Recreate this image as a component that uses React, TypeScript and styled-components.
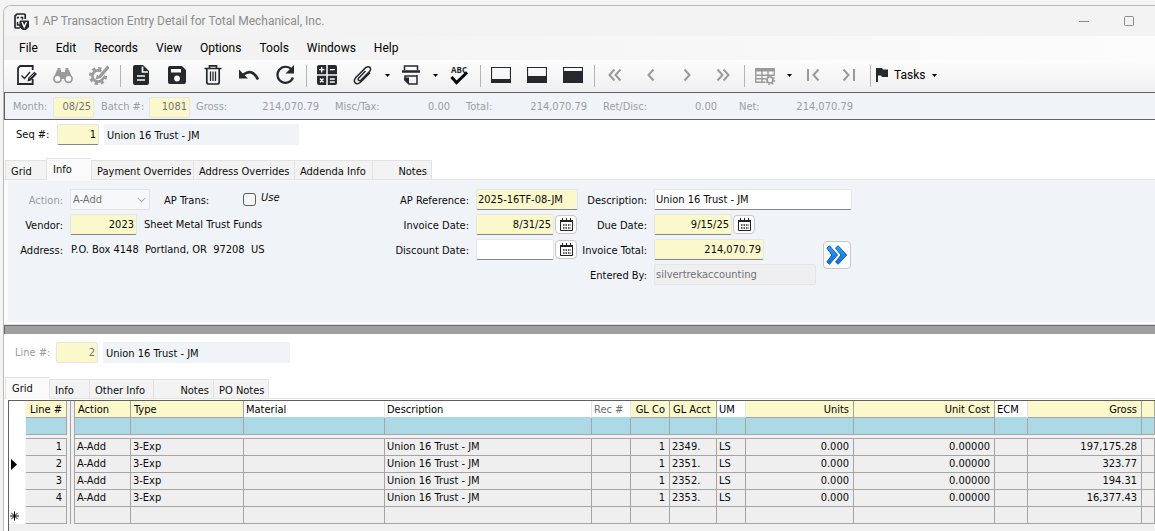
import React from "react";
import styled, { createGlobalStyle, css } from "styled-components";

const ink = "#0a0a0a";
const iconInk = "#25292d";
const mutedIcon = "#9a9a9a";
const mutedText = "#9b9da1";
const required = "#fbf9cc";
const pane = "#f0f4f8";
const rule = "#a5a5a5";
const formFont = `"DejaVu Sans Condensed", "DejaVu Sans", Tahoma, sans-serif`;
const menuFont = `Roboto, "Noto Sans", "Segoe UI", sans-serif`;

const GlobalStyle = createGlobalStyle`
  * { box-sizing: border-box; }
  html { background: #f4f4f4; }
  body { margin: 0; overflow: hidden; font-family: ${formFont}; font-size: 11px; line-height: 14px; color: ${ink}; }
  button, input, select { font: inherit; color: inherit; margin: 0; }
`;

const Page = styled.div`
  padding: 5px 0 0 3px;
  min-height: 100vh;
  display: flex;
`;

const Window = styled.main`
  flex: 1;
  min-width: 0;
  display: flex;
  flex-direction: column;
  border-top: 1px solid #b9b9b9;
  border-left: 1px solid #b9b9b9;
  border-top-left-radius: 8px;
  background: #fff;
  overflow: hidden;
`;

const TitleBar = styled.header`
  display: flex;
  align-items: center;
  height: 30px;
  padding: 0 20px 0 10px;
  background: #f3f3f3;
  color: #8c8c8c;
  font-family: ${menuFont};
`;

const Title = styled.h1`
  flex: 1;
  margin: 0 0 0 4px;
  font-size: 12px;
  font-weight: 400;
`;

const CaptionButton = styled.button`
  display: flex;
  align-items: center;
  justify-content: center;
  width: 45px;
  height: 28px;
  padding: 0;
  border: 0;
  background: none;
  &:last-child { margin-right: -16px; }
`;

const MenuBar = styled.nav`
  display: flex;
  align-items: center;
  height: 24px;
  padding-left: 6px;
  background: linear-gradient(90deg, #f0f0f0, #fcfcfc);
  font-family: ${menuFont};
  font-size: 12px;
  color: #000;
`;

const MenuItem = styled.button`
  padding: 0 9px;
  border: 0;
  background: none;
`;

const Toolbar = styled.div`
  display: flex;
  align-items: center;
  height: 32px;
  padding-left: 5px;
  background: linear-gradient(#fdfdfd, #efefef);
`;

const ToolButton = styled.button<{ $muted?: boolean }>`
  display: flex;
  align-items: center;
  justify-content: center;
  width: 36px;
  height: 32px;
  padding: 0 0 2px;
  border: 0;
  background: none;
  color: ${(p) => (p.$muted ? mutedIcon : iconInk)};
`;

const ArrowButton = styled(ToolButton)`
  width: 12px;
`;

const TasksButton = styled(ToolButton)`
  width: auto;
  gap: 6px;
  padding-left: 3px;
  color: #000;
  font-family: ${menuFont};
  font-size: 12px;
`;

const Separator = styled.span`
  width: 1px;
  height: 22px;
  margin: 0 2px 0 3px;
  background: #b5b5b5;
`;

const SummaryStrip = styled.section`
  display: flex;
  align-items: center;
  height: 28px;
  padding: 2px 0 0 8px;
  border: 1px solid #606266;
  border-right: 0;
  background: ${pane};
  color: ${mutedText};
`;

const SummaryField = styled.label<{ $width: number; $gap: number }>`
  display: flex;
  align-items: center;
  justify-content: space-between;
  width: ${(p) => p.$width}px;
  margin-right: ${(p) => p.$gap}px;
  white-space: nowrap;
`;

const SummaryValue = styled.output`
  text-align: right;
`;

const Input = styled.input<{
  $width: number;
  $right?: boolean;
  $required?: boolean;
}>`
  width: ${(p) => p.$width}px;
  height: 21px;
  padding: 0 2px 1px 1px;
  border: 1px solid #e3e5e8;
  border-bottom-color: #85878a;
  border-radius: 2px;
  background: ${(p) => (p.$required ? required : "#fff")};
  text-align: ${(p) => (p.$right ? "right" : "left")};
  outline: none;
  &:disabled {
    color: #707275;
    border-color: #e3e5e8;
    background: ${(p) => (p.$required ? required : "#efefef")};
  }
`;

const RecordHeader = styled.div<{ $top: number; $height: number; $inset: number }>`
  display: flex;
  align-items: flex-start;
  height: ${(p) => p.$height}px;
  padding: ${(p) => p.$top}px 0 0 ${(p) => p.$inset}px;
`;

const RecordLabel = styled.label<{ $muted?: boolean }>`
  width: 40px;
  margin-right: 1px;
  line-height: 21px;
  white-space: nowrap;
  color: ${(p) => (p.$muted ? mutedText : ink)};
`;

const RecordName = styled.output<{ $width: number }>`
  width: ${(p) => p.$width}px;
  height: 21px;
  margin-left: 5px;
  padding: 2px 3px 0;
  line-height: 20px;
  background: ${pane};
`;

const TabStrip = styled.div`
  display: flex;
  align-items: flex-end;
  height: 22px;
  padding-left: 1px;
  border-bottom: 1px solid #e2e2e2;
`;

const Tab = styled.button<{ $width: number; $selected?: boolean; $end?: boolean }>`
  width: ${(p) => p.$width}px;
  height: 19px;
  padding: 3px 4px 0 5px;
  border: 1px solid #e2e2e2;
  border-bottom: 0;
  border-right: 0;
  background: #f3f3f3;
  text-align: ${(p) => (p.$end ? "right" : "left")};
  line-height: 14px;
  white-space: nowrap;
  &:last-child { border-right: 1px solid #e2e2e2; }
  ${(p) =>
    p.$selected &&
    css`
      height: 22px;
      margin-bottom: -1px;
      padding: 1px 6px 0;
      background: #fafafa;
    `}
`;

const PanelFrame = styled.section`
  padding: 1px 0 2px 4px;
  border-bottom: 1px solid #e2e2e2;
  background: #fafafa;
`;

const InfoPanel = styled.div`
  display: flex;
  align-items: flex-start;
  height: 141px;
  padding-top: 8px;
  background: ${pane};
`;

const FieldColumn = styled.div<{ $label: number; $width: number }>`
  display: grid;
  grid-template-columns: ${(p) => p.$label}px 1fr;
  column-gap: 7px;
  grid-auto-rows: 21px;
  row-gap: 4px;
  align-items: center;
  width: ${(p) => p.$width}px;
`;

const FieldLabel = styled.label<{ $muted?: boolean }>`
  padding-top: 2px;
  text-align: right;
  white-space: nowrap;
  color: ${(p) => (p.$muted ? mutedText : ink)};
`;

const FieldRow = styled.div`
  display: flex;
  align-items: center;
  gap: 1px;
`;

const FieldText = styled.output<{ $gap?: number }>`
  padding: 1px 0 0 ${(p) => p.$gap ?? 0}px;
  white-space: nowrap;
`;

const SelectBox = styled.div`
  display: grid;
  align-items: center;
  width: 80px;
  & > * { grid-area: 1 / 1; }
  & > svg { justify-self: end; margin-right: 4px; pointer-events: none; }
`;

const Select = styled.select`
  appearance: none;
  width: 100%;
  height: 21px;
  padding: 0 2px;
  border: 1px solid #e0e2e4;
  border-radius: 1px;
  background: #f7f8f9;
  color: #707275;
  opacity: 1;
`;

const TransLabel = styled.span`
  width: 78px;
  margin-left: 13px;
  padding-top: 2px;
`;

const UseLabel = styled.label`
  display: flex;
  align-items: flex-start;
  gap: 5px;
  height: 20px;
  line-height: 16px;
  font-style: italic;
`;

const Checkbox = styled.input`
  appearance: none;
  width: 13px;
  height: 13px;
  margin-top: 3px;
  border: 1px solid #5c5c5c;
  border-radius: 3px;
  background: #f6f6f6;
`;

const DateButton = styled.button`
  display: flex;
  align-items: center;
  justify-content: center;
  width: 22px;
  height: 19px;
  padding: 0;
  border: 1px solid #c6c8ca;
  border-radius: 4px;
  background: #fdfdfd;
  color: #222;
`;

const AdvanceButton = styled(DateButton)`
  width: 28px;
  height: 28px;
  margin-top: 52px;
`;

const Splitter = styled.div`
  height: 9px;
  border-top: 1px solid #6b6b6b;
  border-left: 1px solid #6b6b6b;
  background: #a0a0a0;
`;

const GridFrame = styled.section`
  flex: 1;
  margin: 1px 0 0 4px;
  border-top: 1px solid #606060;
  border-left: 1px solid #606060;
  background: #f0f0f0;
`;

const Table = styled.table`
  width: 100%;
  table-layout: fixed;
  border-collapse: separate;
  border-spacing: 0;
`;

const Row = styled.tr<{ $height: number }>`
  height: ${(p) => p.$height}px;
`;

const Cell = styled.td<{ $end?: boolean }>`
  padding: 0 4px 0 2px;
  border-right: 1px solid ${rule};
  border-bottom: 1px solid ${rule};
  background: #efefef;
  text-align: ${(p) => (p.$end ? "right" : "left")};
  line-height: 14px;
  white-space: nowrap;
  overflow: hidden;
`;

const HeadCell = styled(Cell)<{ $required?: boolean; $muted?: boolean }>`
  padding: 2px 4px 0 ${(p) => (p.$required ? 3 : 2)}px;
  font-weight: 400;
  background: ${(p) => (p.$required ? required : "#fff")};
  border-right-color: ${(p) => (p.$required ? rule : "#e6e6e6")};
  border-bottom-color: ${(p) => (p.$required ? rule : "#add8e6")};
  color: ${(p) => (p.$muted ? "#6c6c6c" : "#000")};
`;

const FilterCell = styled(Cell)`
  background: #add8e6;
`;

const SpacerCell = styled(Cell)`
  padding: 0;
  border-right: 0;
  background: #f0f0f0;
  line-height: 0;
`;

const MarkerCell = styled.td`
  padding: 0;
  background: #fff;
  border-right: 1px solid #f4f4f4;
  line-height: 0;
`;

const RailCell = styled.td`
  padding: 0;
  border-right: 1px solid ${rule};
  background: #f0f0f0;
`;

type IconProps = { size?: number; children: React.ReactNode };
const Icon = ({ size = 20, children }: IconProps) => (
  <svg
    width={size}
    height={size}
    viewBox={`0 0 ${size} ${size}`}
    fill="none"
    stroke="currentColor"
    strokeWidth="2"
    aria-hidden="true"
  >
    {children}
  </svg>
);

const AppIcon = () => (
  <svg width="15" height="17" viewBox="0 0 15 17" fill="none" stroke={iconInk} aria-hidden="true">
    <path d="M11.200 6V2q0-1-1-1H3L1 2.800V14q0 1 1 1h4" strokeWidth="1.700" />
    <path d="M3.500 5.500v-1H5M6.500 4.500h2v2M3.500 9v3H6" strokeWidth="1.500" />
    <path d="M6 8h8.500v6L12 16.500H8.500L6 14Z" fill={iconInk} />
    <path d="m8 9 2.200 5 2.300-5" stroke="#fff" strokeWidth="1.500" />
  </svg>
);

const EditIcon = () => (
  <Icon>
    <path d="M15.700 5V1H3L1 3v16h14.700v-5" strokeWidth="1.800" />
    <path d="m4.500 10.500 3 3 5.500-6.500" strokeWidth="1.400" />
    <path d="m10.500 16.500.8-3.700 6-6 2.700 2.200-6.200 6.500Z" fill="currentColor" stroke="none" />
    <path d="m12.500 13.500 5-5" stroke="#fafafa" strokeWidth=".6" />
  </Icon>
);

const FindIcon = () => (
  <Icon>
    <path d="M4 5h4v2h4V5h4l1.500 3.500L19 13l-4.500-2-3 3h-3l-3-3L1 13l1.500-4.500Z" fill="currentColor" stroke="none" />
    <path d="M4.500 3h3v2h-3zM12.500 3h3v2h-3z" fill="currentColor" stroke="none" />
    <circle cx="4.500" cy="13.800" r="3.600" fill="#fafafa" strokeWidth="1.700" />
    <circle cx="15.500" cy="13.800" r="3.600" fill="#fafafa" strokeWidth="1.700" />
  </Icon>
);

const SettingsEditIcon = () => (
  <Icon>
    <circle cx="9" cy="11" r="5.600" strokeWidth="2.600" />
    <circle cx="9" cy="11" r="7.700" strokeWidth="2.800" strokeDasharray="3.200 2.850" />
    <path d="m11 11.500 8.500-10" stroke="#f7f7f7" strokeWidth="5" />
    <path d="m10.500 12 9-10.500" strokeWidth="3.200" />
    <path d="m6.500 14.500 1.500-5 4 3.500Z" fill="currentColor" stroke="none" />
  </Icon>
);

const DocumentIcon = () => (
  <Icon>
    <path d="M4 0h8l6 6v12q0 2-2 2H4q-2 0-2-2V2q0-2 2-2Z" fill="currentColor" stroke="none" />
    <path d="M11.500 1.500V7H17M6 11h8M6 15h8" stroke="#fafafa" strokeWidth="1.700" />
  </Icon>
);

const SaveIcon = () => (
  <Icon>
    <path d="M3 1h12l4 4v12q0 2-2 2H3q-2 0-2-2V3q0-2 2-2Z" fill="currentColor" stroke="none" />
    <path d="M4 4h10v3.500H4z" fill="#fafafa" stroke="none" />
    <circle cx="10" cy="13.500" r="2.900" fill="#fafafa" stroke="none" />
  </Icon>
);

const TrashIcon = () => (
  <Icon>
    <path d="M1.500 3.500h17M6.500 3V.8h7V3M3.800 4v13q0 2 2 2h8.400q2 0 2-2V4" strokeWidth="1.700" />
    <path d="M7.500 6.500v9.500M10 6.500v9.500M12.500 6.500v9.500" strokeWidth="1.300" />
  </Icon>
);

const UndoIcon = () => (
  <Icon>
    <path d="M4.500 9.500Q13.500 3 19 14.500" strokeWidth="2.600" />
    <path d="M0 4.500v9h9Z" fill="currentColor" stroke="none" />
  </Icon>
);

const RefreshIcon = () => (
  <Icon>
    <path d="M16.500 4.500A8 8 0 1 0 18 12.500" strokeWidth="2.200" />
    <path d="M19 0v8.500h-8.500Z" fill="currentColor" stroke="none" />
  </Icon>
);

const CalculatorIcon = () => (
  <Icon>
    <path
      d="M2 0h7.200v9.200H0V2q0-2 2-2ZM10.800 0H18q2 0 2 2v7.200h-9.200zM0 10.800h9.200V20H2q-2 0-2-2zM10.800 10.800H20V18q0 2-2 2h-7.200z"
      fill="currentColor"
      stroke="none"
    />
    <path
      d="M2 4.700h5.500M4.700 2v5.500M12.800 4.700h5M3 13.500l3.500 3.700M6.500 13.500 3 17.200M12.800 14h5M12.800 17h5"
      stroke="#fff"
      strokeWidth="1.300"
    />
  </Icon>
);

const ClipIcon = () => (
  <Icon>
    <path
      d="m12.500 5.500-6.700 6.900q-1.200 1.500-.2 2.400t2.400-.2l8.500-8.700q2-2.400.4-4t-4.200.2L2.800 12q-2.600 3.200-.6 5.400 2.300 2 5.300-.6L17 7.300"
      strokeWidth="1.500"
      transform="translate(0 .5)"
    />
  </Icon>
);

const PrintIcon = () => (
  <Icon>
    <path d="M3.500 5V1h13v4" strokeWidth="1.500" />
    <path d="M1 6.500h18" strokeWidth="2.400" />
    <path d="M16 10v9H8l-4-4v-4h12" strokeWidth="1.500" />
    <path d="M3.200 12.500H8V19.500L3.200 15Z" fill="currentColor" stroke="none" />
  </Icon>
);

const SpellButtonIcon = () => (
  <Icon>
    <text x="10" y="8" textAnchor="middle" fontFamily="Open Sans, sans-serif" fontSize="8" fontWeight="700" fill="currentColor" stroke="none">
      ABC
    </text>
    <path d="m2.500 12 5 5.500L18 7.500" strokeWidth="3" stroke="#000" />
  </Icon>
);

const PaneIcon = ({ top }: { top: number }) => (
  <Icon>
    <path d="M.5 2.500h19v15H.5z" strokeWidth="1.200" />
    <path d={`M.5 ${top}h19v${18 - top}H.5z`} fill="currentColor" stroke="none" />
  </Icon>
);

const ChevronsIcon = ({ d }: { d: string }) => (
  <Icon>
    <path d={d} strokeWidth="2" />
  </Icon>
);

const TableSettingsIcon = () => (
  <Icon>
    <path d="M0 3h20v3.500H0z" fill="currentColor" stroke="none" />
    <path d="M.800 4v13.200H10M1 10.200h18M1 13.700h9M7 6v11M13 6v4M19.200 4v7" strokeWidth="1.400" />
    <circle cx="15" cy="15" r="3" fill="#f5f5f5" strokeWidth="1.700" />
    <circle cx="15" cy="15" r="4.400" strokeWidth="1.300" strokeDasharray="1.700 1.750" />
  </Icon>
);

const Caret = () => (
  <svg width="5" height="3" viewBox="0 0 5 3" aria-hidden="true">
    <path d="M0 0h5L2.500 3Z" fill="#000" />
  </svg>
);

const FlagIcon = () => (
  <svg width="12" height="14" viewBox="0 0 12 14" aria-hidden="true">
    <path d="M0 0h6l1 1.500h5V9H6L5 7.500H2V14H0Z" fill={iconInk} />
  </svg>
);

const CalendarIcon = () => (
  <svg width="13" height="13" viewBox="0 0 13 13" aria-hidden="true">
    <path d="M.5 2.500h12v10H.5z" fill="#fff" stroke="currentColor" />
    <path d="M0 3h13" stroke="currentColor" strokeWidth="2" />
    <path d="M2.500 0v3M6.500 0v3M10.500 0v3" stroke="currentColor" />
    <path d="M3 7h8M3 10h8" stroke="currentColor" strokeWidth="1.600" strokeDasharray="1.500 1" />
  </svg>
);

const AdvanceIcon = () => (
  <svg width="22" height="20" viewBox="0 0 22 20" aria-hidden="true">
    <defs>
      <linearGradient id="advanceBlue" x1="0" y1="0" x2="0" y2="1">
        <stop offset="0" stopColor="#35a0f2" />
        <stop offset="1" stopColor="#0b6fd8" />
      </linearGradient>
    </defs>
    <g fill="url(#advanceBlue)" stroke="#1260b8" strokeWidth="1" strokeLinejoin="round">
      <path d="M.800 3 3.500.8 11.500 10l-8 9.200L.8 17l5-7Z" />
      <path d="M9.500 3l2.700-2.200L20.700 10l-8.500 9.200L9.500 17l5.500-7Z" />
    </g>
  </svg>
);

const DateField = ({ id, label, width, value, filled }: { id: string; label: string; width: number; value: string; filled?: boolean }) => (
  <>
    <FieldLabel htmlFor={id}>{label}</FieldLabel>
    <FieldRow>
      <Input id={id} $width={width} $right $required={filled} defaultValue={value} />
      <DateButton aria-label={`Pick ${label}`}>
        <CalendarIcon />
      </DateButton>
    </FieldRow>
  </>
);

type Column = { name: string; width?: number; end?: boolean; required?: boolean; muted?: boolean };

const columns: Column[] = [
  { name: "Action", width: 56, required: true },
  { name: "Type", width: 113, required: true },
  { name: "Material", width: 141 },
  { name: "Description", width: 207 },
  { name: "Rec #", width: 39, muted: true },
  { name: "GL Co", width: 39, end: true, required: true },
  { name: "GL Acct", width: 47, required: true },
  { name: "UM", width: 29 },
  { name: "Units", width: 108, end: true, required: true },
  { name: "Unit Cost", width: 141, end: true, required: true },
  { name: "ECM", width: 33 },
  { name: "Gross", width: 114, end: true, required: true },
  { name: "", required: true },
];

const entry = (account: string, gross: string) => [
  "A-Add", "3-Exp", "", "Union 16 Trust - JM", "", "1", account, "LS", "0.000", "0.00000", "", gross, "",
];

const lines: { line: string; marker?: "current" | "new"; cells: string[] }[] = [
  { line: "1", cells: entry("2349.", "197,175.28") },
  { line: "2", marker: "current", cells: entry("2351.", "323.77") },
  { line: "3", cells: entry("2352.", "194.31") },
  { line: "4", cells: entry("2353.", "16,377.43") },
  { line: "", marker: "new", cells: columns.map(() => "") },
];

const Marker = ({ kind }: { kind?: "current" | "new" }) => {
  if (!kind) return null;
  return (
    <svg width="12" height="12" viewBox="0 0 12 12" aria-hidden="true">
      {kind === "current" ? (
        <path d="M2 0v11l6-5.500Z" fill="#000" />
      ) : (
        <path d="M5.500 1.500v9M1 6h9M2.300 2.800l6.400 6.400M8.700 2.800 2.300 9.200" stroke="#000" strokeWidth="1" />
      )}
    </svg>
  );
};

const LineGrid = () => (
  <GridFrame>
    <Table>
      <colgroup>
        <col style={{ width: 17 }} />
        <col style={{ width: 41 }} />
        <col style={{ width: 4 }} />
        <col style={{ width: 4 }} />
        {columns.map((c) => (
          <col key={c.name} style={{ width: c.width }} />
        ))}
      </colgroup>
      <thead>
        <Row $height={17}>
          <MarkerCell />
          <HeadCell as="th" scope="col" $end $required>Line #</HeadCell>
          <RailCell />
          <RailCell />
          {columns.map((c) => (
            <HeadCell as="th" scope="col" key={c.name} $end={c.end} $required={c.required} $muted={c.muted}>
              {c.name}
            </HeadCell>
          ))}
        </Row>
        <Row $height={17}>
          <MarkerCell />
          <FilterCell />
          <RailCell />
          <RailCell />
          {columns.map((c) => (
            <FilterCell key={c.name} />
          ))}
        </Row>
        <Row $height={4}>
          <MarkerCell />
          <SpacerCell />
          <RailCell />
          <RailCell />
          <SpacerCell colSpan={columns.length} />
        </Row>
      </thead>
      <tbody>
        {lines.map((l) => (
          <Row $height={17} key={l.line}>
            <MarkerCell>
              <Marker kind={l.marker} />
            </MarkerCell>
            <Cell $end>{l.line}</Cell>
            <RailCell />
            <RailCell />
            {l.cells.map((text, i) => (
              <Cell key={columns[i].name} $end={columns[i].end}>
                {text}
              </Cell>
            ))}
          </Row>
        ))}
      </tbody>
    </Table>
  </GridFrame>
);

const menus = ["File", "Edit", "Records", "View", "Options", "Tools", "Windows", "Help"];

const totals = [
  { label: "Gross:", value: "214,070.79", width: 123, gap: 16 },
  { label: "Misc/Tax:", value: "0.00", width: 115, gap: 16 },
  { label: "Total:", value: "214,070.79", width: 121, gap: 16 },
  { label: "Ret/Disc:", value: "0.00", width: 114, gap: 22 },
  { label: "Net:", value: "214,070.79", width: 114, gap: 0 },
];

export default function App() {
  return (
    <>
      <GlobalStyle />
      <Page>
        <Window>
          <TitleBar>
            <AppIcon />
            <Title>1 AP Transaction Entry Detail for Total Mechanical, Inc.</Title>
            <CaptionButton aria-label="Minimize">
              <svg width="10" height="10" viewBox="0 0 10 10"><path d="M0 5.500h10" stroke="#8c8c8c" /></svg>
            </CaptionButton>
            <CaptionButton aria-label="Maximize">
              <svg width="10" height="10" viewBox="0 0 10 10"><rect x=".5" y=".5" width="9" height="9" rx="1" fill="none" stroke="#8c8c8c" /></svg>
            </CaptionButton>
          </TitleBar>
          <MenuBar>
            {menus.map((m) => (
              <MenuItem key={m}>{m}</MenuItem>
            ))}
          </MenuBar>
          <Toolbar role="toolbar">
            <ToolButton aria-label="Edit"><EditIcon /></ToolButton>
            <ToolButton aria-label="Find" $muted><FindIcon /></ToolButton>
            <ToolButton aria-label="Validate" $muted><SettingsEditIcon /></ToolButton>
            <Separator />
            <ToolButton aria-label="New"><DocumentIcon /></ToolButton>
            <ToolButton aria-label="Save"><SaveIcon /></ToolButton>
            <ToolButton aria-label="Delete"><TrashIcon /></ToolButton>
            <ToolButton aria-label="Undo"><UndoIcon /></ToolButton>
            <ToolButton aria-label="Refresh"><RefreshIcon /></ToolButton>
            <Separator />
            <ToolButton aria-label="Calculator"><CalculatorIcon /></ToolButton>
            <ToolButton aria-label="Attachments"><ClipIcon /></ToolButton>
            <ArrowButton aria-label="Attachment options"><Caret /></ArrowButton>
            <ToolButton aria-label="Print"><PrintIcon /></ToolButton>
            <ArrowButton aria-label="Print options"><Caret /></ArrowButton>
            <ToolButton aria-label="Spelling"><SpellButtonIcon /></ToolButton>
            <Separator />
            <ToolButton aria-label="Small detail pane"><PaneIcon top={14} /></ToolButton>
            <ToolButton aria-label="Split panes"><PaneIcon top={11} /></ToolButton>
            <ToolButton aria-label="Large detail pane"><PaneIcon top={6} /></ToolButton>
            <Separator />
            <ToolButton aria-label="First" $muted><ChevronsIcon d="M9.500 4.500 4.500 10l5 5.500M15.500 4.500l-5 5.500 5 5.500" /></ToolButton>
            <ToolButton aria-label="Previous" $muted><ChevronsIcon d="M12.500 4.500 7.500 10l5 5.500" /></ToolButton>
            <ToolButton aria-label="Next" $muted><ChevronsIcon d="m7.500 4.500 5 5.500-5 5.500" /></ToolButton>
            <ToolButton aria-label="Last" $muted><ChevronsIcon d="m4.500 4.500 5 5.500-5 5.500M10.500 4.500l5 5.500-5 5.500" /></ToolButton>
            <Separator />
            <ToolButton aria-label="Grid settings" $muted><TableSettingsIcon /></ToolButton>
            <ArrowButton aria-label="Grid options"><Caret /></ArrowButton>
            <ToolButton aria-label="First batch" $muted><ChevronsIcon d="M5 4v12M15.500 4.500l-5 5.500 5 5.500" /></ToolButton>
            <ToolButton aria-label="Last batch" $muted><ChevronsIcon d="m4.500 4.500 5 5.500-5 5.500M15 4v12" /></ToolButton>
            <Separator />
            <TasksButton><FlagIcon />Tasks<Caret /></TasksButton>
          </Toolbar>
          <SummaryStrip>
            <SummaryField $width={81} $gap={7}>
              Month:
              <Input $width={41} $right $required disabled value="08/25" />
            </SummaryField>
            <SummaryField $width={89} $gap={6}>
              Batch #:
              <Input $width={41} $right $required disabled value="1081" />
            </SummaryField>
            {totals.map((t) => (
              <SummaryField key={t.label} $width={t.width} $gap={t.gap}>
                {t.label}
                <SummaryValue>{t.value}</SummaryValue>
              </SummaryField>
            ))}
          </SummaryStrip>
          <RecordHeader $top={4} $height={38} $inset={12}>
            <RecordLabel htmlFor="seq">Seq #:</RecordLabel>
            <Input id="seq" $width={42} $right $required defaultValue="1" />
            <RecordName $width={195}>Union 16 Trust - JM</RecordName>
          </RecordHeader>
          <TabStrip role="tablist">
            <Tab role="tab" $width={41}>Grid</Tab>
            <Tab role="tab" $width={45} $selected aria-selected>Info</Tab>
            <Tab role="tab" $width={102}>Payment Overrides</Tab>
            <Tab role="tab" $width={101}>Address Overrides</Tab>
            <Tab role="tab" $width={78}>Addenda Info</Tab>
            <Tab role="tab" $width={60} $end>Notes</Tab>
          </TabStrip>
          <PanelFrame>
            <InfoPanel>
              <FieldColumn $label={55} $width={328}>
                <FieldLabel htmlFor="action" $muted>Action:</FieldLabel>
                <FieldRow>
                  <SelectBox>
                    <Select id="action" disabled defaultValue="A-Add">
                      <option>A-Add</option>
                    </Select>
                    <svg width="9" height="6" viewBox="0 0 9 6"><path d="m.5.8 4 4 4-4" fill="none" stroke="#a0a2a4" /></svg>
                  </SelectBox>
                  <TransLabel>AP Trans:</TransLabel>
                  <UseLabel><Checkbox type="checkbox" />Use</UseLabel>
                </FieldRow>
                <FieldLabel htmlFor="vendor">Vendor:</FieldLabel>
                <FieldRow>
                  <Input id="vendor" $width={67} $right $required defaultValue="2023" />
                  <FieldText $gap={6}>Sheet Metal Trust Funds</FieldText>
                </FieldRow>
                <FieldLabel as="span">Address:</FieldLabel>
                <FieldText $gap={1}>P.O. Box 4148&nbsp; Portland, OR&nbsp; 97208&nbsp; US</FieldText>
              </FieldColumn>
              <FieldColumn $label={133} $width={242}>
                <FieldLabel htmlFor="reference">AP Reference:</FieldLabel>
                <Input id="reference" $width={102} $required defaultValue="2025-16TF-08-JM" />
                <DateField id="invoiceDate" label="Invoice Date:" width={78} value="8/31/25" filled />
                <DateField id="discountDate" label="Discount Date:" width={78} value="" />
              </FieldColumn>
              <FieldColumn $label={69} $width={245}>
                <FieldLabel htmlFor="description">Description:</FieldLabel>
                <Input id="description" $width={198} defaultValue="Union 16 Trust - JM" />
                <DateField id="dueDate" label="Due Date:" width={78} value="9/15/25" filled />
                <FieldLabel htmlFor="total">Invoice Total:</FieldLabel>
                <Input id="total" $width={110} $right $required defaultValue="214,070.79" />
                <FieldLabel htmlFor="enteredBy">Entered By:</FieldLabel>
                <Input id="enteredBy" $width={162} disabled value="silvertrekaccounting" />
              </FieldColumn>
              <AdvanceButton aria-label="Advance"><AdvanceIcon /></AdvanceButton>
            </InfoPanel>
          </PanelFrame>
          <Splitter role="separator" />
          <RecordHeader $top={8} $height={43} $inset={11}>
            <RecordLabel htmlFor="line" $muted>Line #:</RecordLabel>
            <Input id="line" $width={42} $right $required disabled value="2" />
            <RecordName $width={187}>Union 16 Trust - JM</RecordName>
          </RecordHeader>
          <TabStrip role="tablist">
            <Tab role="tab" $width={44} $selected aria-selected>Grid</Tab>
            <Tab role="tab" $width={40}>Info</Tab>
            <Tab role="tab" $width={64}>Other Info</Tab>
            <Tab role="tab" $width={60} $end>Notes</Tab>
            <Tab role="tab" $width={56}>PO Notes</Tab>
          </TabStrip>
          <LineGrid />
        </Window>
      </Page>
    </>
  );
}
